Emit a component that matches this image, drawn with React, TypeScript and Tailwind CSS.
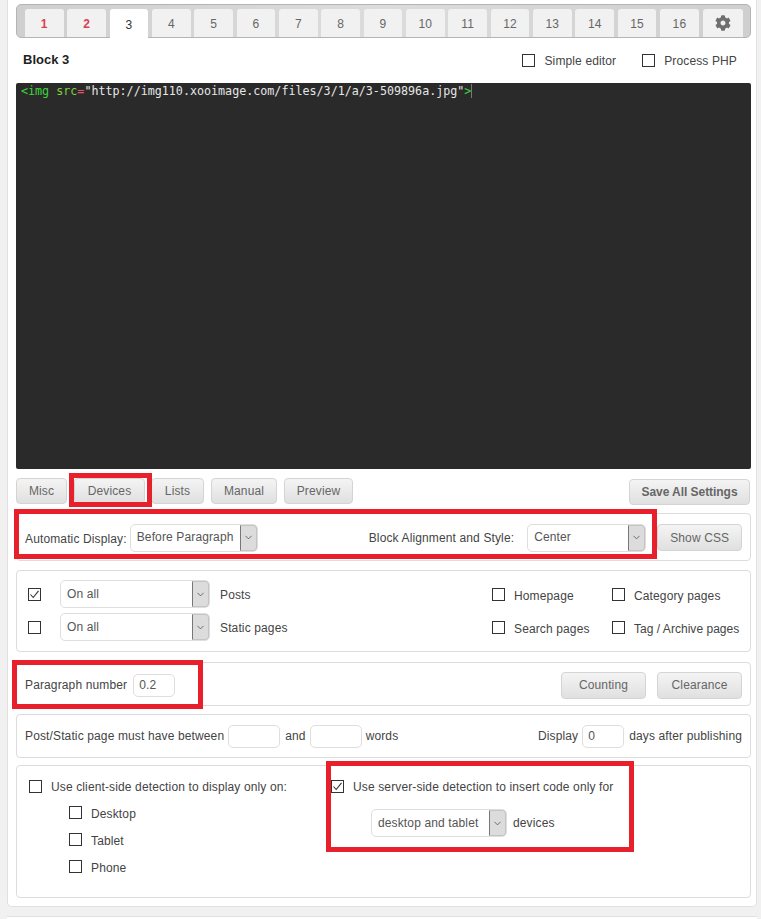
import { ChevronDown } from "lucide-react";
import { FaCog } from "react-icons/fa";

const tabs = ["1", "2", "3", "4", "5", "6", "7", "8", "9", "10", "11", "12", "13", "14", "15", "16"];

function Box({ checked }: { checked?: boolean }) {
  return (
    <span className="flex h-[13px] w-[13px] shrink-0 items-center justify-center border border-[#333] bg-white">
      {checked && (
        <svg width="11" height="11" viewBox="0 0 11 11" fill="none">
          <path d="M1.5 5.5 L4.2 8.5 L9.5 1.8" stroke="#333" strokeWidth="1.1" />
        </svg>
      )}
    </span>
  );
}

function Select({ label, className }: { label: string; className: string }) {
  return (
    <div className={`flex h-[28px] shrink-0 items-stretch rounded-[5px] border border-[#dedede] bg-white ${className}`}>
      <span className="flex flex-1 items-center whitespace-nowrap pb-[1px] pl-[6px] text-[#555]">{label}</span>
      <span className="flex w-[17px] items-center justify-center rounded-r-[4px] border border-y-[#c4c4c4] border-l-[#777] border-r-[#c4c4c4] bg-[#dcdcdc]">
        <ChevronDown size={11} strokeWidth={1.6} className="text-[#444]" />
      </span>
    </div>
  );
}

function Btn({ label, className, bold }: { label: string; className: string; bold?: boolean }) {
  return (
    <div className={`flex shrink-0 items-center justify-center rounded-[4px] border border-[#d4d4d4] bg-gradient-to-b from-[#f4f4f4] to-[#e0e0e0] text-[#666] ${bold ? "font-bold tracking-[-0.05px]" : ""} ${className}`}>
      {label}
    </div>
  );
}

function Field({ value, className }: { value?: string; className: string }) {
  return (
    <div className={`flex h-[23px] shrink-0 items-center rounded-[5px] border border-[#dedede] bg-white pl-[5px] text-[#555] ${className}`}>
      {value}
    </div>
  );
}

function Panel({ className, children }: { className: string; children: React.ReactNode }) {
  return <div className={`rounded-[4px] border border-[#dcdcdc] bg-white ${className}`}>{children}</div>;
}

function Opt({ label, checked, className = "", low }: { label: string; checked?: boolean; className?: string; low?: boolean }) {
  return (
    <div className={`flex items-center gap-[9px] ${className}`}>
      <Box checked={checked} />
      <span className={`whitespace-nowrap ${low ? "pt-[4px]" : ""}`}>{label}</span>
    </div>
  );
}

export default function App() {
  return (
    <div className="relative h-[919px] w-[761px] overflow-hidden bg-[#f1f1f1] text-[12px] leading-none tracking-[0.13px] text-[#444] [font-family:'Liberation_Sans',Arial,sans-serif]">
      <div className="ml-[7px] h-[907px] w-[750px] rounded-b-[5px] border-x border-b border-[#e0e0e0] bg-white pl-[8px] pr-[5px] pt-[4px]">
        {/* tabs */}
        <div className="flex h-[34px] items-end gap-[3.85px] rounded-[5px] border border-[#b4b4b4] bg-gradient-to-r from-[#cfcfcf] via-[#dcdcdc] to-[#cfcfcf] pl-[8px]">
          {tabs.map((t, i) => (
            <div
              key={t}
              className={`flex h-[28px] w-[38.5px] items-center justify-center rounded-t-[3px] pt-[2px] ${
                i === 2
                  ? "relative top-[1px] h-[29px] bg-white text-[#333]"
                  : i < 2
                    ? "bg-[#f1f1f1] font-bold text-[#d9404f]"
                    : "bg-[#f1f1f1] text-[#666]"
              }`}
            >
              {t}
            </div>
          ))}
          <div className="flex h-[28px] w-[40px] items-center justify-center rounded-t-[3px] bg-[#f1f1f1]">
            <FaCog size={16} className="text-[#6f6f6f]" />
          </div>
        </div>

        {/* title row */}
        <div className="flex h-[45px] items-center pl-[7px] pr-[14px]">
          <h2 className="mb-[3px] flex-1 text-[13px] font-bold tracking-normal text-[#222]">Block 3</h2>
          <Opt label="Simple editor" className="mr-[26px]" />
          <Opt label="Process PHP" />
        </div>

        {/* editor */}
        <div className="h-[386px] rounded-[2px] bg-[#2a2a2a] pl-[5px] pt-[1px] text-[11.7px] leading-[15px] tracking-normal text-[#e6e6e6] [font-family:'DejaVu_Sans_Mono',monospace]">
          <span className="text-[#3fd43f]">&lt;img</span> <span className="text-[#7fd13f]">src</span>
          <span className="text-[#e0566f]">=</span>
          <span>"http://img110.xooimage.com/files/3/1/a/3-509896a.jpg"</span>
          <span className="text-[#3fd43f]">&gt;</span>
          <span className="border-r border-[#777]" />
        </div>

        {/* sub tabs */}
        <div className="mt-[9px] flex h-[27px] items-start">
          <Btn label="Misc" className="mr-[7px] h-[26px] w-[51px]" />
          <Btn label="Devices" className="mr-[6px] h-[26px] w-[71px]" />
          <Btn label="Lists" className="mr-[7px] h-[26px] w-[53px]" />
          <Btn label="Manual" className="mr-[7px] h-[26px] w-[66px]" />
          <Btn label="Preview" className="h-[26px] w-[69px]" />
          <Btn label="Save All Settings" bold className="ml-auto mr-[1px] mt-[1px] h-[26px] w-[121px]" />
        </div>

        {/* automatic display */}
        <Panel className="mt-[8px] flex h-[48px] items-center pl-[8px]">
          <span className="mt-[4px] whitespace-nowrap">Automatic Display:</span>
          <Select label="Before Paragraph" className="ml-[3px] mt-[1px] w-[128px]" />
          <span className="ml-[111px] mt-[1px] whitespace-nowrap">Block Alignment and Style:</span>
          <Select label="Center" className="ml-[13px] mt-[1px] w-[119px]" />
          <Btn label="Show CSS" className="ml-[11px] mt-[1px] h-[27px] w-[85px]" />
        </Panel>

        {/* page types */}
        <Panel className="mt-[9px] h-[82px] pl-[11px] pt-[10px]">
          <div className="flex h-[26px] items-center">
            <Box checked />
            <Select label="On all" className="ml-[19px] h-[26px] w-[150px]" />
            <span className="ml-[10px] w-[272px] pt-[2px]">Posts</span>
            <Opt label="Homepage" low className="w-[120px]" />
            <Opt label="Category pages" low />
          </div>
          <div className="mt-[7px] flex h-[26px] items-center">
            <Box />
            <Select label="On all" className="ml-[19px] h-[26px] w-[150px]" />
            <span className="ml-[10px] w-[272px] pt-[2px]">Static pages</span>
            <Opt label="Search pages" low className="w-[120px]" />
            <Opt label="Tag / Archive pages" low className="tracking-[0.03px]" />
          </div>
        </Panel>

        {/* paragraph number */}
        <Panel className="mt-[10px] flex h-[44px] items-center pl-[8px] pr-[8px] pt-[2px]">
          <span>Paragraph number</span>
          <Field value="0.2" className="ml-[6px] w-[42px]" />
          <Btn label="Counting" className="ml-auto h-[27px] w-[85px]" />
          <Btn label="Clearance" className="ml-[11px] h-[27px] w-[85px]" />
        </Panel>

        {/* word limits */}
        <Panel className="mt-[8px] flex h-[44px] items-center pl-[8px] pr-[8px]">
          <span>Post/Static page must have between</span>
          <Field className="ml-[4px] w-[52px]" />
          <span className="ml-[5px]">and</span>
          <Field className="ml-[4px] w-[52px]" />
          <span className="ml-[4px]">words</span>
          <span className="ml-auto">Display</span>
          <Field value="0" className="ml-[4px] w-[42px]" />
          <span className="ml-[5px]">days after publishing</span>
        </Panel>

        {/* detection */}
        <Panel className="mt-[7px] flex h-[133px] pt-[14px]">
          <div className="w-[314px] pl-[12px]">
            <Opt label="Use client-side detection to display only on:" />
            <div className="mt-[11px] flex flex-col gap-[11px] pl-[40px]">
              <Opt label="Desktop" low />
              <Opt label="Tablet" low />
              <Opt label="Phone" low />
            </div>
          </div>
          <div>
            <Opt checked label="Use server-side detection to insert code only for" />
            <div className="mt-[16px] flex items-center pl-[40px]">
              <Select label="desktop and tablet" className="w-[136px]" />
              <span className="ml-[6px]">devices</span>
            </div>
          </div>
        </Panel>
      </div>

      <div className="ml-[7px] mt-[9px] h-[3px] w-[750px] border-t border-[#e0e0e0] bg-white" />

      {/* red annotation frames over the screenshot */}
      <div className="absolute left-[69px] top-[473px] h-[34px] w-[83px] border-[5px] border-[#e8202c]" />
      <div className="absolute left-[14px] top-[509px] h-[50px] w-[643px] border-[5px] border-[#e8202c]" />
      <div className="absolute left-[12px] top-[660px] h-[49px] w-[191px] border-[5px] border-[#e8202c]" />
      <div className="absolute left-[326px] top-[761px] h-[91px] w-[308px] border-[5px] border-[#e8202c]" />
    </div>
  );
}
